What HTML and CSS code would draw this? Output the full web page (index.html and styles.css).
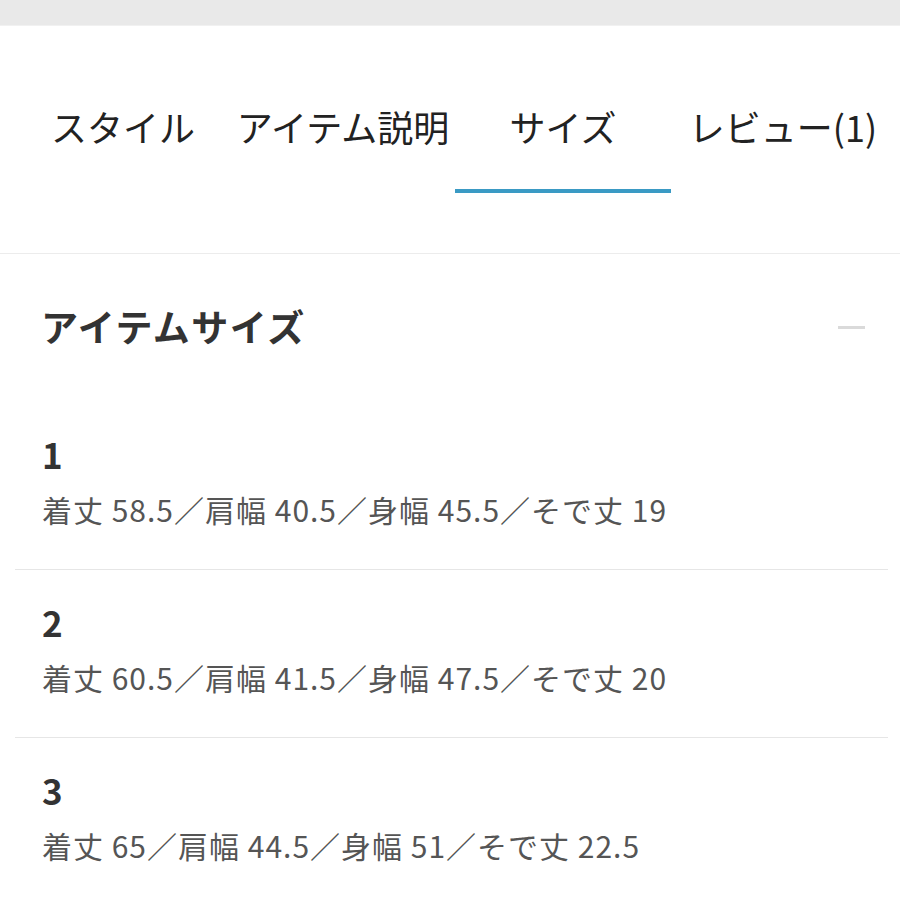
FILE: index.html
```html
<!DOCTYPE html>
<html lang="ja">
<head>
<meta charset="utf-8">
<title>サイズ</title>
<link rel="stylesheet" href="styles.css">
</head>
<body>
<div class="topbar"></div>
<nav class="tabs">
  <div class="tab">スタイル</div>
  <div class="tab">アイテム説明</div>
  <div class="tab active">サイズ</div>
  <div class="tab">レビュー(1)</div>
</nav>
<section class="sizes">
  <div class="sizes-head">
    <h2 class="sizes-title">アイテムサイズ</h2>
    <span class="minus"></span>
  </div>
  <div class="row">
    <div class="row-num">1</div>
    <div class="row-detail">着丈 58.5／肩幅 40.5／身幅 45.5／そで丈 19</div>
  </div>
  <div class="row">
    <div class="row-num">2</div>
    <div class="row-detail">着丈 60.5／肩幅 41.5／身幅 47.5／そで丈 20</div>
  </div>
  <div class="row">
    <div class="row-num">3</div>
    <div class="row-detail">着丈 65／肩幅 44.5／身幅 51／そで丈 22.5</div>
  </div>
</section>
</body>
</html>
```

FILE: styles.css
```css
* { box-sizing: border-box; }
html, body {
  margin: 0;
  padding: 0;
  background: #ffffff;
  font-family: "Noto Sans CJK JP", "Noto Sans", sans-serif;
  color: #222;
}
body { width: 900px; overflow: hidden; }

.topbar {
  height: 26px;
  background: #e9e9e9;
  border-bottom: 1px solid #f1f1f1;
}

.tabs {
  display: grid;
  grid-template-columns: repeat(4, 220px);
  padding-left: 13px;
  height: 228px;
  border-bottom: 1px solid #ececec;
}
.tab {
  position: relative;
  height: 167px;
  padding-top: 75px;
  text-align: center;
  font-size: 36px;
  line-height: 50px;
  font-weight: 400;
  color: #222;
  white-space: nowrap;
}
.tab.active::after {
  content: "";
  position: absolute;
  left: 2px;
  right: 2px;
  bottom: 0;
  height: 4px;
  background: #3a9ac4;
}

.sizes-head {
  display: flex;
  align-items: center;
  justify-content: space-between;
  padding: 47px 35px 51px 41px;
}
.sizes-title {
  margin: 0;
  font-size: 37px;
  line-height: 50px;
  font-weight: 700;
  letter-spacing: 1.5px;
  color: #333;
}
.minus {
  width: 27px;
  height: 3px;
  background: #dadada;
  margin-top: 2px;
}

.row {
  margin: 0 12px 0 15px;
  padding: 32px 0 40px 27px;
  border-bottom: 1px solid #e6e6e6;
}
.row-num {
  font-size: 35px;
  line-height: 40px;
  font-weight: 700;
  color: #333;
}
.row-detail {
  margin-top: 15px;
  font-size: 30px;
  line-height: 40px;
  letter-spacing: 1px;
  color: #555;
  white-space: nowrap;
}
```
